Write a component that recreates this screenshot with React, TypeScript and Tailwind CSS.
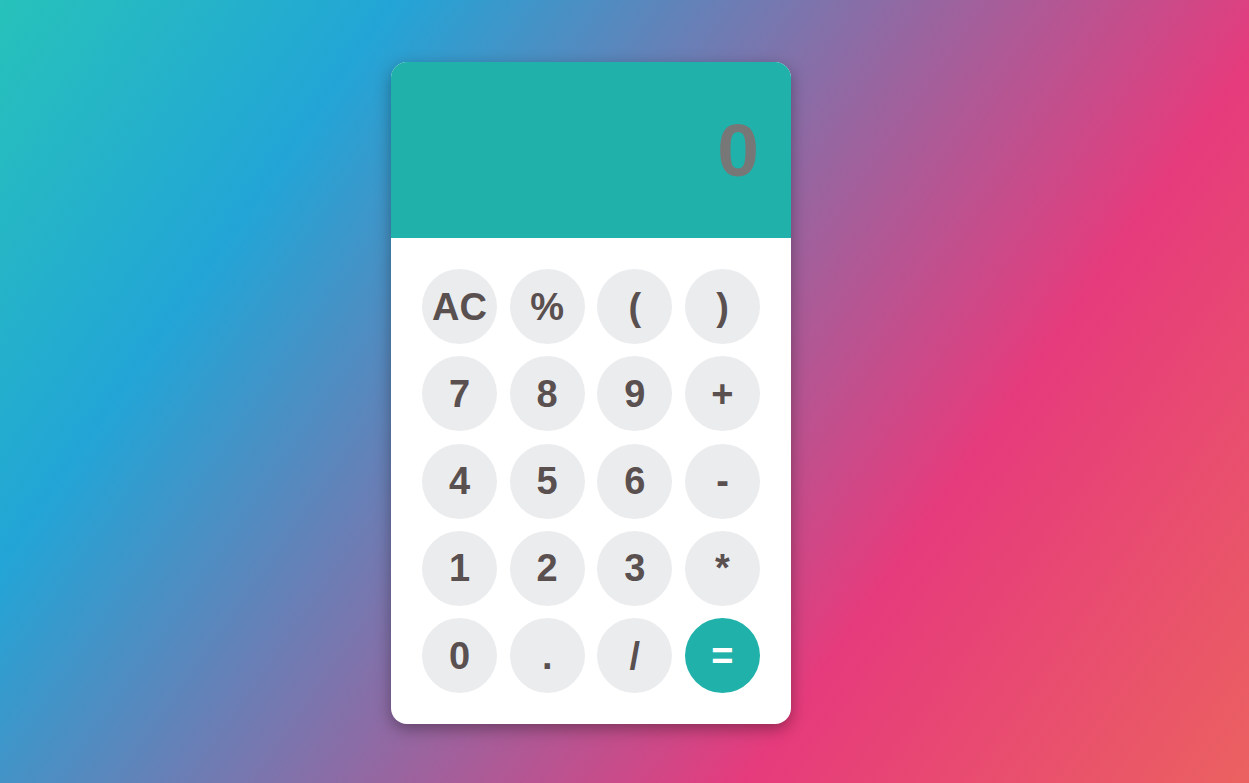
import React from "react";

const keys: { label: string; accent?: boolean }[] = [
  { label: "AC" },
  { label: "%" },
  { label: "(" },
  { label: ")" },
  { label: "7" },
  { label: "8" },
  { label: "9" },
  { label: "+" },
  { label: "4" },
  { label: "5" },
  { label: "6" },
  { label: "-" },
  { label: "1" },
  { label: "2" },
  { label: "3" },
  { label: "*" },
  { label: "0" },
  { label: "." },
  { label: "/" },
  { label: "=", accent: true },
];

export default function App() {
  return (
    <div
      className="flex h-[783px] w-full items-start pl-[391px] pt-[62px] bg-[linear-gradient(125deg,#27c2ba_0%,#22a5d6_22%,#e63b7c_72%,#eb6160_100%)]"
      style={{ fontFamily: '"Liberation Sans", Arial, sans-serif' }}
    >
      <div className="w-[400px] overflow-hidden rounded-[16px] bg-white shadow-[0_5px_16px_rgba(0,0,0,0.35)]">
        <div className="flex h-[176px] items-center justify-end bg-[#20b2aa] pr-[32px]">
          <span className="text-[75px] font-bold leading-none text-[#777777]">0</span>
        </div>
        <div className="grid grid-cols-[repeat(4,75px)] gap-x-[12.67px] gap-y-[12.25px] px-[31px] py-[31px]">
          {keys.map((k) => (
            <button
              key={k.label}
              className={
                k.accent
                  ? "flex h-[75px] w-[75px] items-center justify-center rounded-full bg-[#20b2aa] text-[38px] font-bold leading-none text-white"
                  : "flex h-[75px] w-[75px] items-center justify-center rounded-full bg-[#ebecee] text-[38px] font-bold leading-none text-[#5a5050]"
              }
            >
              {k.label}
            </button>
          ))}
        </div>
      </div>
    </div>
  );
}
